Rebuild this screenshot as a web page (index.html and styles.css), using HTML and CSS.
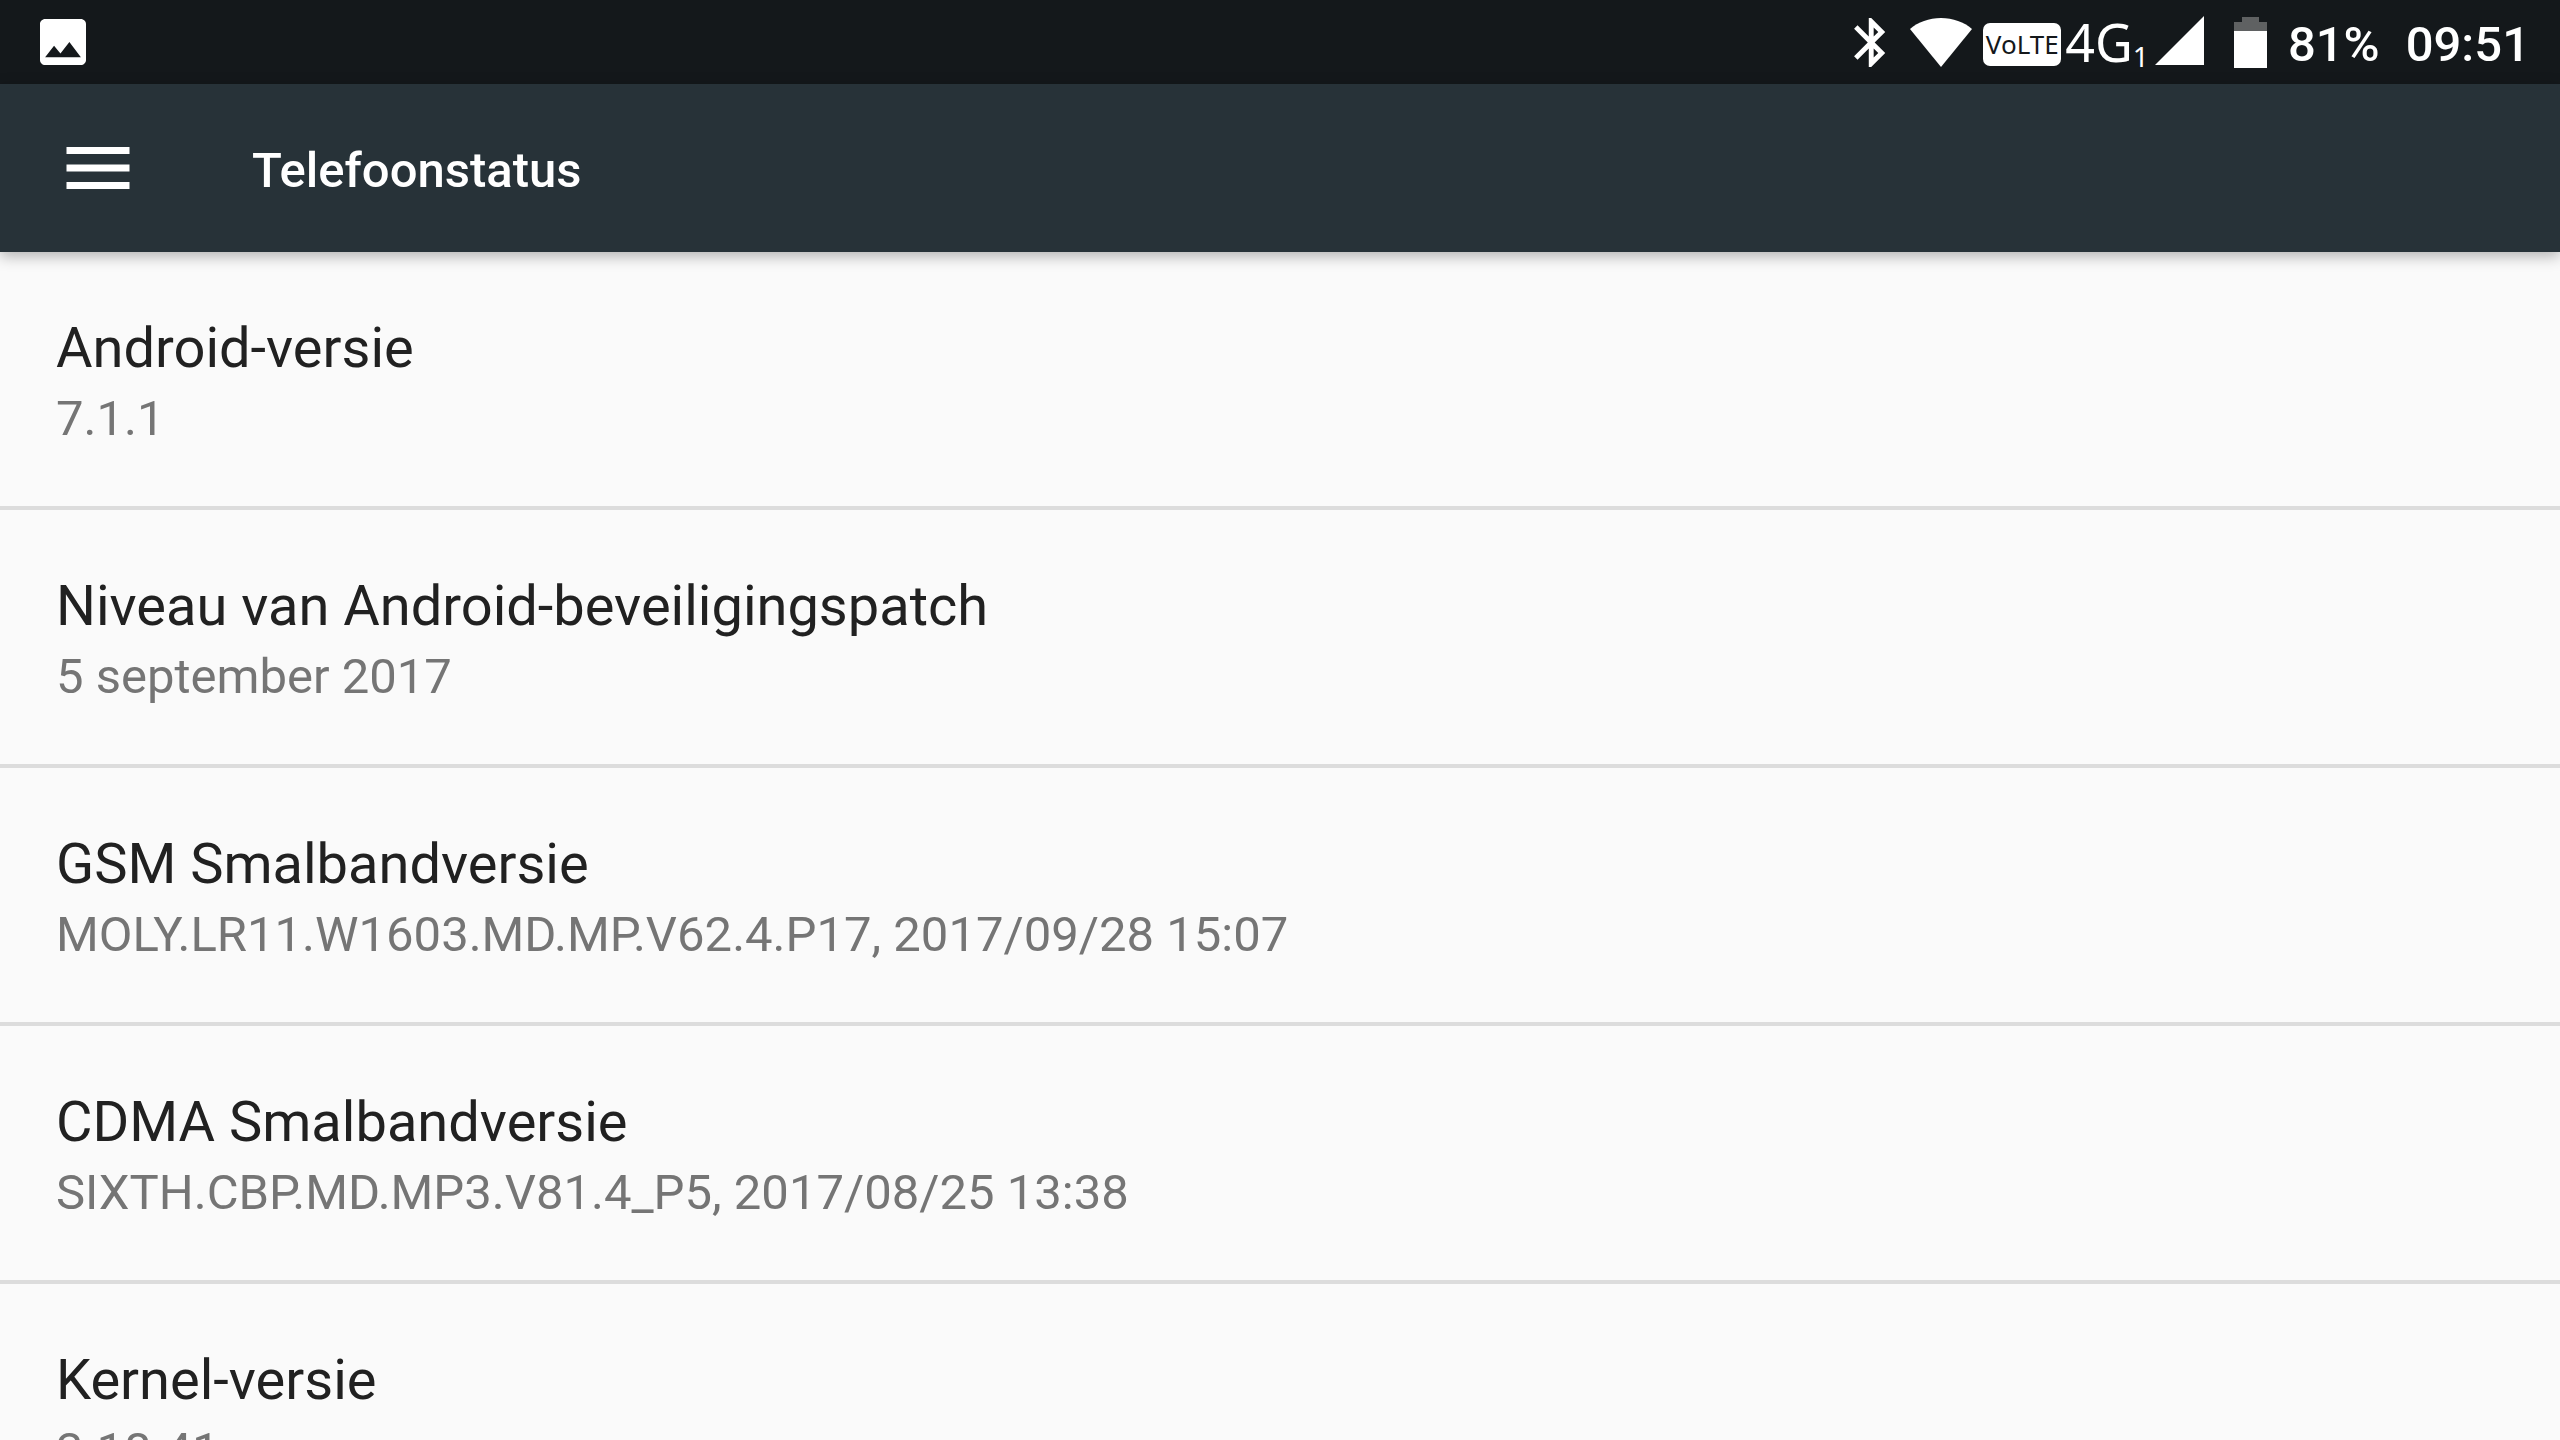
FILE: index.html
```html
<!DOCTYPE html>
<html lang="nl">
<head>
	<meta charset="utf-8">
	<title>Telefoonstatus</title>
	<link rel="stylesheet" href="styles.css">
</head>
<body>
	<div class="statusbar">
		<svg class="photo" viewBox="3 3 18 18"><path fill="#fff" d="M21 19V5c0-1.100-.9-2-2-2H5c-1.100 0-2 .9-2 2v14c0 1.100.9 2 2 2h14c1.100 0 2-.9 2-2zM8.500 13.500l2.500 3.010L14.500 12l4.500 6H5l3.500-4.500z"/></svg>
		<div class="icons">
			<svg class="bt" viewBox="5 2 13 20"><path fill="#fff" d="M17.710 7.710L12 2h-1v7.590L6.410 5 5 6.410 10.590 12 5 17.590 6.410 19 11 14.410V22h1l5.710-5.710-4.300-4.290 4.300-4.290zM13 5.830l1.880 1.880L13 9.590V5.830zm1.880 10.460L13 18.170v-3.760l1.880 1.880z"/></svg>
			<svg class="wifi" viewBox="0 0 62 49"><path fill="#fff" d="M31 49L0 11C8 4 19 0 31 0s23 4 31 11z"/></svg>
			<span class="volte">VoLTE</span>
			<span class="net">4G</span>
			<span class="sim">1</span>
			<svg class="signal" viewBox="0 0 49 49"><path fill="#fff" d="M0 49L49 0v49z"/></svg>
			<svg class="battery" viewBox="0 0 33 51"><path fill="#5f6162" d="M8 0h17v5h8v9H0V5h8z"/><path fill="#fff" d="M0 14h33v37H0z"/></svg>
			<span class="percent">81%</span>
			<span class="clock">09:51</span>
		</div>
	</div>
	<header class="toolbar">
		<button class="menu" aria-label="Menu">
			<svg viewBox="0 0 18 12"><path fill="#fff" d="M0 12h18v-2H0v2zm0-5h18V5H0v2zm0-7v2h18V0H0z"/></svg>
		</button>
		<h1>Telefoonstatus</h1>
	</header>
	<main>
		<dl class="list">
			<div class="item">
				<dt>Android-versie</dt>
				<dd>7.1.1</dd>
			</div>
			<div class="item">
				<dt>Niveau van Android-beveiligingspatch</dt>
				<dd>5 september 2017</dd>
			</div>
			<div class="item">
				<dt>GSM Smalbandversie</dt>
				<dd>MOLY.LR11.W1603.MD.MP.V62.4.P17, 2017/09/28 15:07</dd>
			</div>
			<div class="item">
				<dt>CDMA Smalbandversie</dt>
				<dd>SIXTH.CBP.MD.MP3.V81.4_P5, 2017/08/25 13:38</dd>
			</div>
			<div class="item">
				<dt>Kernel-versie</dt>
				<dd>3.18.41</dd>
			</div>
		</dl>
	</main>
</body>
</html>
```
FILE: styles.css
```css
*{
	box-sizing:border-box;
}
body{
	margin:0;
	height:100vh;
	display:flex;
	flex-direction:column;
	overflow:hidden;
	background-color:#fafafa;
	font-family:Roboto,sans-serif;
}
.statusbar{
	flex:none;
	height:84px;
	padding:0 30px 0 40px;
	display:flex;
	align-items:center;
	justify-content:space-between;
	background-color:#14181b;
	color:white;
}
.icons{
	display:flex;
	align-items:center;
}
svg{
	display:block;
	flex:none;
}
.photo{
	width:46px;
	height:46px;
}
.bt{
	width:32px;
	height:49px;
	margin-right:24px;
}
.wifi{
	width:62px;
	height:49px;
	margin-right:11px;
}
.volte{
	width:78px;
	height:43px;
	margin-top:4px;
	margin-right:4px;
	border-radius:7px;
	background-color:white;
	color:#14181b;
	font:26px/43px "Noto Sans",sans-serif;
	text-align:center;
}
.net{
	font:52px/84px "Noto Sans",sans-serif;
}
.sim{
	align-self:flex-end;
	margin-right:6px;
	padding-bottom:8px;
	font:28px/40px "Noto Sans",sans-serif;
}
.signal{
	width:49px;
	height:49px;
	margin-bottom:4px;
	margin-right:30px;
}
.battery{
	width:33px;
	height:51px;
	margin-right:21px;
}
.percent,.clock{
	padding-top:4px;
	font-size:49px;
	font-weight:500;
}
.percent{
	margin-right:26px;
}
.toolbar{
	flex:none;
	height:168px;
	padding:0 66px;
	display:flex;
	align-items:center;
	position:relative;
	background-color:#273238;
	color:white;
	box-shadow:0 4px 14px rgba(0,0,0,0.3);
}
.menu{
	padding:0;
	border:0;
	margin-right:122px;
	background:none;
	cursor:pointer;
}
.menu svg{
	width:64px;
	height:42px;
}
h1{
	margin:0;
	padding-top:4px;
	font-size:49px;
	font-weight:500;
}
main{
	flex:1;
	min-height:0;
	overflow:hidden;
}
.list{
	margin:0;
}
.item{
	padding:59px 56px 53px;
	border-bottom:4px solid #dcdcdc;
}
dt{
	font-size:56px;
	line-height:74px;
	color:#212121;
}
dd{
	margin:0;
	font-size:49px;
	line-height:68px;
	color:#757575;
}
```
